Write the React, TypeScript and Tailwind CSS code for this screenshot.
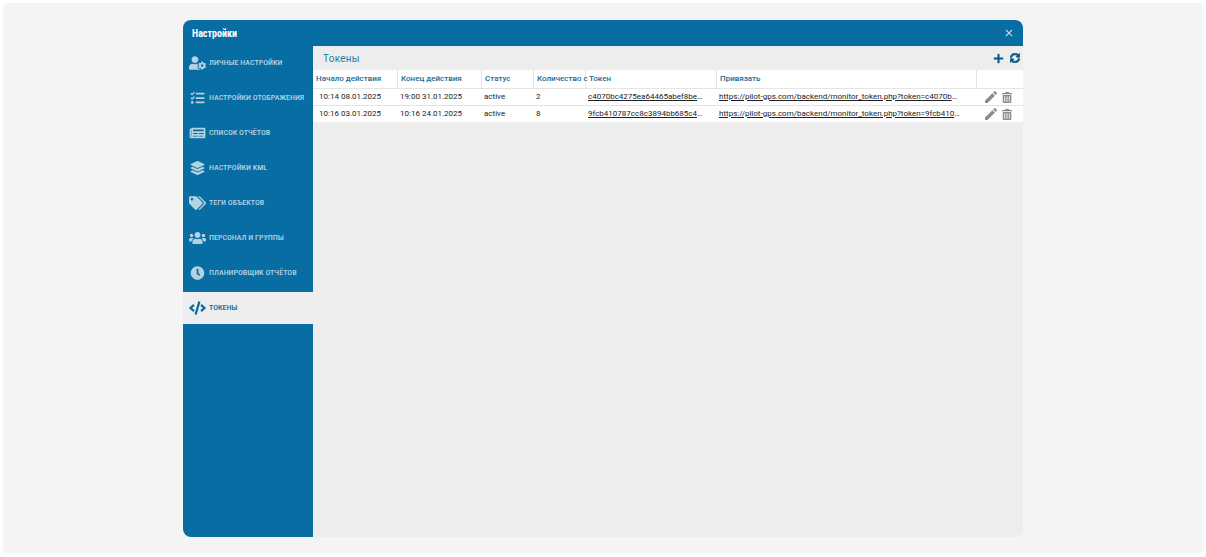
import { useState } from 'react';
import type { IconType } from 'react-icons';
import {
  FaClock,
  FaCode,
  FaLayerGroup,
  FaNewspaper,
  FaPlus,
  FaSyncAlt,
  FaTags,
  FaTasks,
  FaUserCog,
  FaUsers,
} from 'react-icons/fa';
import { MdClose, MdEdit } from 'react-icons/md';

interface MenuItem {
  id: string;
  label: string;
  icon: IconType;
}

interface Token {
  start: string;
  end: string;
  status: string;
  count: number;
  token: string;
  link: string;
}

const LINK_BASE = 'https://pilot-gps.com/backend/monitor_token.php?token=';

const menu: MenuItem[] = [
  { id: 'personal', label: 'Личные настройки', icon: FaUserCog },
  { id: 'display', label: 'Настройки отображения', icon: FaTasks },
  { id: 'reports', label: 'Список отчётов', icon: FaNewspaper },
  { id: 'kml', label: 'Настройки KML', icon: FaLayerGroup },
  { id: 'tags', label: 'Теги объектов', icon: FaTags },
  { id: 'staff', label: 'Персонал и группы', icon: FaUsers },
  { id: 'scheduler', label: 'Планировщик отчётов', icon: FaClock },
  { id: 'tokens', label: 'Токены', icon: FaCode },
];

const tokens: Token[] = [
  {
    start: '10:14 08.01.2025',
    end: '19:00 31.01.2025',
    status: 'active',
    count: 2,
    token: 'c4070bc4275ea64465abef8be',
    link: LINK_BASE + 'c4070b',
  },
  {
    start: '10:16 03.01.2025',
    end: '10:16 24.01.2025',
    status: 'active',
    count: 8,
    token: '9fcb410787cc8c3894bb685c4',
    link: LINK_BASE + '9fcb410',
  },
];

const TrashIcon = () => (
  <svg viewBox="0 0 10 11" fill="currentColor" className="w-[10px] h-[11px]">
    <path d="M3 0h4v1h3v1.200H0V1h3z" />
    <path
      fillRule="evenodd"
      d="M.7 3h8.600v7q0 1-1 1H1.700q-1 0-1-1zM2.300 4.300v5.400h.9V4.300zM4.550 4.300v5.400h.9V4.300zM6.800 4.300v5.400h.9V4.300z"
    />
  </svg>
);

const headCell =
  'h-[18px] pl-[3px] border-l border-[#e4e4e4] first:border-l-0 text-left font-medium whitespace-nowrap';

const App = () => {
  const [active, setActive] = useState('tokens');

  return (
    <div className="min-h-screen flex bg-white p-[3px] pb-1 font-[Roboto,sans-serif]">
      <main className="flex-1 flex justify-center rounded bg-[#f4f4f4] pt-[17px] pb-4">
        <section className="w-[70%] flex flex-col overflow-hidden rounded-lg">
          <header className="h-[26px] flex items-center justify-between pl-[9px] pr-2 bg-[#076da3] text-white">
            <h1 className="text-[10px] font-bold font-['Roboto_Condensed',Roboto,sans-serif]">
              Настройки
            </h1>
            <button type="button" aria-label="Закрыть">
              <MdClose className="w-3 h-3 text-[#d5e6f0]" />
            </button>
          </header>

          <div className="flex-1 flex">
            <nav className="w-[130px] shrink-0 flex flex-col gap-[3px] pt-px bg-[#076da3]">
              {menu.map(({ id, label, icon: Icon }) => (
                <button
                  key={id}
                  type="button"
                  onClick={() => setActive(id)}
                  className={
                    active === id
                      ? 'h-8 flex items-center gap-[3px] pl-[6px] pb-px bg-[#ededed] text-[#076da3]'
                      : 'h-8 flex items-center gap-[3px] pl-[6px] pb-px text-[#b3d3e4]'
                  }
                >
                  <Icon className="w-[17px] h-[14px] shrink-0" />
                  <span className="text-[8px] leading-3 font-medium uppercase whitespace-nowrap font-['Roboto_Condensed',Roboto,sans-serif]">
                    {label}
                  </span>
                </button>
              ))}
            </nav>

            <div className="flex-1 min-w-0 bg-[#ededed]">
              <div className="h-6 flex items-center justify-between pl-[10px] pr-[3px]">
                <h2 className="text-[10px] tracking-wide text-[#2a7ba6]">Токены</h2>
                <div className="flex items-center gap-[6px] text-[#075985]">
                  <button type="button" aria-label="Добавить">
                    <FaPlus className="w-[11px] h-[11px]" />
                  </button>
                  <button type="button" aria-label="Обновить">
                    <FaSyncAlt className="w-[10px] h-[10px] stroke-current stroke-[40]" />
                  </button>
                </div>
              </div>

              <table className="w-full table-fixed border-separate border-spacing-0 bg-white">
                <colgroup>
                  <col className="w-[84px]" />
                  <col className="w-[84px]" />
                  <col className="w-[52px]" />
                  <col className="w-[52px]" />
                  <col className="w-[131px]" />
                  <col />
                  <col className="w-[47px]" />
                </colgroup>
                <thead className="text-[8px] leading-4 text-[#1d6a92]">
                  <tr>
                    <th className={headCell}>Начало действия</th>
                    <th className={headCell}>Конец действия</th>
                    <th className={headCell}>Статус</th>
                    <th className={headCell}>Количество с</th>
                    <th className={headCell}>Токен</th>
                    <th className={headCell}>Привязать</th>
                    <th className={headCell} aria-label="Действия" />
                  </tr>
                </thead>
                <tbody className="text-[8px] leading-4 text-[#222]">
                  {tokens.map((row) => (
                    <tr
                      key={row.token}
                      className="[&>td]:h-[17px] [&>td]:border-t [&>td]:border-[#e4e4e4] [&>td]:whitespace-nowrap"
                    >
                      <td className="pl-[6px]">{row.start}</td>
                      <td className="pl-[3px]">{row.end}</td>
                      <td className="pl-[3px]">{row.status}</td>
                      <td className="pl-[3px]">{row.count}</td>
                      <td className="pl-[3px]">
                        <a href={LINK_BASE + row.token} className="underline">
                          {row.token}
                        </a>
                        …
                      </td>
                      <td className="pl-[3px]">
                        <a href={LINK_BASE + row.token} className="underline">
                          {row.link}
                        </a>
                        …
                      </td>
                      <td className="pl-[7px]">
                        <div className="flex items-center gap-[3px] text-[#8c8c8c]">
                          <button type="button" aria-label="Изменить">
                            <MdEdit className="w-4 h-4" />
                          </button>
                          <button type="button" aria-label="Удалить">
                            <TrashIcon />
                          </button>
                        </div>
                      </td>
                    </tr>
                  ))}
                </tbody>
              </table>
            </div>
          </div>
        </section>
      </main>
    </div>
  );
};

export default App;
